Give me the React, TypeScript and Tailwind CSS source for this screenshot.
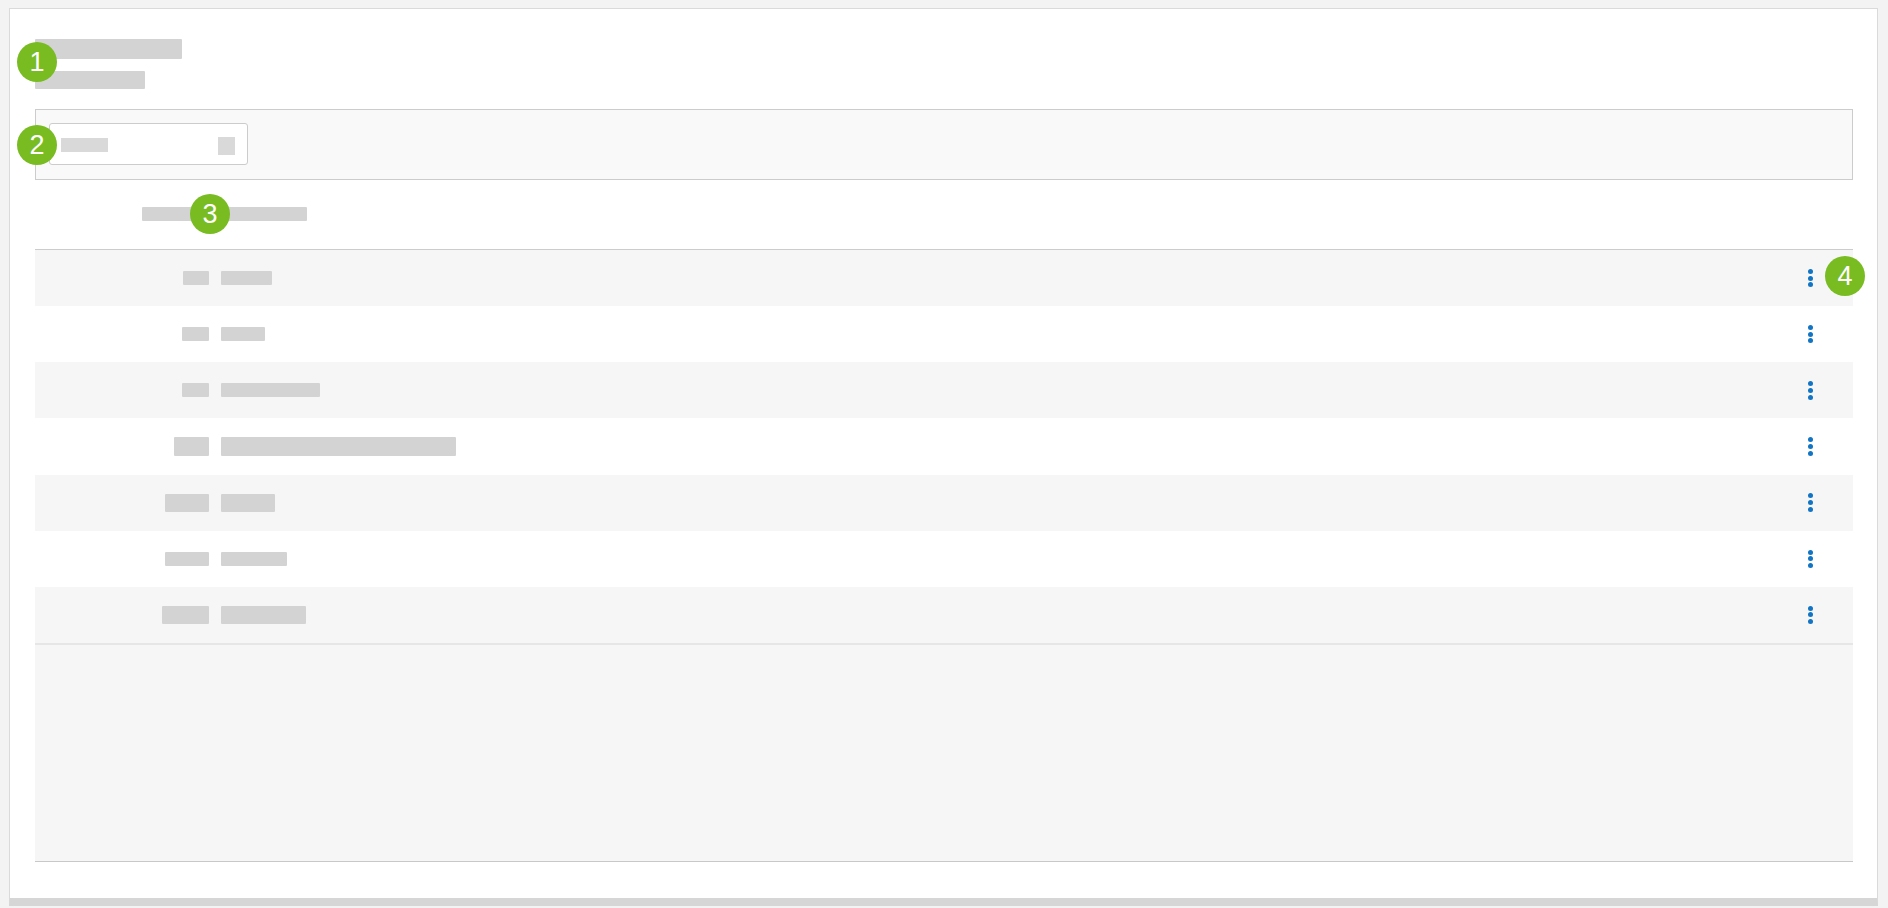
import React from "react";

type Row = { code: number; name: number; h: number };

const rows: Row[] = [
  { code: 26, name: 51, h: 14 },
  { code: 27, name: 44, h: 14 },
  { code: 27, name: 99, h: 14 },
  { code: 35, name: 235, h: 19 },
  { code: 44, name: 54, h: 18 },
  { code: 44, name: 66, h: 14 },
  { code: 47, name: 85, h: 18 },
];

function Badge({ n, className }: { n: number; className: string }) {
  return (
    <div
      className={`absolute z-10 flex h-10 w-10 items-center justify-center rounded-full bg-[#78bc22] text-[27px] leading-none text-white ${className}`}
      style={{ fontFamily: '"Liberation Sans", Arial, sans-serif' }}
    >
      {n}
    </div>
  );
}

function Dots() {
  return (
    <div className="flex flex-col items-center gap-[1.7px]">
      <span className="block h-[5px] w-[5px] rounded-full bg-[#1274c4]" />
      <span className="block h-[5px] w-[5px] rounded-full bg-[#1274c4]" />
      <span className="block h-[5px] w-[5px] rounded-full bg-[#1274c4]" />
    </div>
  );
}

export default function App() {
  return (
    <div className="min-h-[908px] bg-[#f3f3f3] pl-[9px] pr-[10px] pt-[8px]">
      <div className="relative h-[898px] border-x border-t border-b-[8px] border-[#dadada] border-b-[#d6d6d6] bg-white pl-[25px] pr-[24px] pt-[30px]">
        {/* Title */}
        <div className="h-[20px] w-[147px] rounded-[1px] bg-[#d3d3d3]" />
        <div className="mt-[12px] h-[18px] w-[110px] rounded-[1px] bg-[#d3d3d3]" />

        {/* Filter panel */}
        <div className="mt-[20px] h-[71px] border border-[#cccccc] bg-[#f9f9f9] pl-[13px] pt-[13px]">
          <div className="flex h-[42px] w-[199px] items-start rounded-[3px] border border-[#cccccc] bg-white pl-[11px]">
            <div className="mt-[14px] h-[14px] w-[47px] bg-[#d9d9d9]" />
            <div className="ml-auto mr-[12px] mt-[13px] h-[18px] w-[17px] bg-[#d9d9d9]" />
          </div>
        </div>

        {/* Table header */}
        <div className="flex h-[70px] items-center border-b border-[#cccccc] pl-[107px]">
          <div className="mt-[-1px] h-[14px] w-[165px] rounded-[1px] bg-[#d3d3d3]" />
        </div>

        {/* Rows */}
        <div>
          {rows.map((r, i) => (
            <div
              key={i}
              className={`flex h-[56.14px] items-center ${i % 2 === 0 ? "bg-[#f6f6f6]" : "bg-white"}`}
            >
              <div className="flex w-[174px] justify-end">
                <div className="rounded-[1px] bg-[#d3d3d3]" style={{ width: r.code, height: r.h }} />
              </div>
              <div className="ml-[12px] rounded-[1px] bg-[#d3d3d3]" style={{ width: r.name, height: r.h }} />
              <div className="ml-auto mr-[40px]">
                <Dots />
              </div>
            </div>
          ))}
        </div>

        {/* Empty area */}
        <div className="h-[219px] border-b border-t-2 border-t-[#e6e6e6] border-b-[#c8c8c8] bg-[#f6f6f6]" />

        <Badge n={1} className="left-[7px] top-[33px]" />
        <Badge n={2} className="left-[7px] top-[116px]" />
        <Badge n={3} className="left-[180px] top-[185px]" />
        <Badge n={4} className="left-[1815px] top-[247px]" />
      </div>
    </div>
  );
}
